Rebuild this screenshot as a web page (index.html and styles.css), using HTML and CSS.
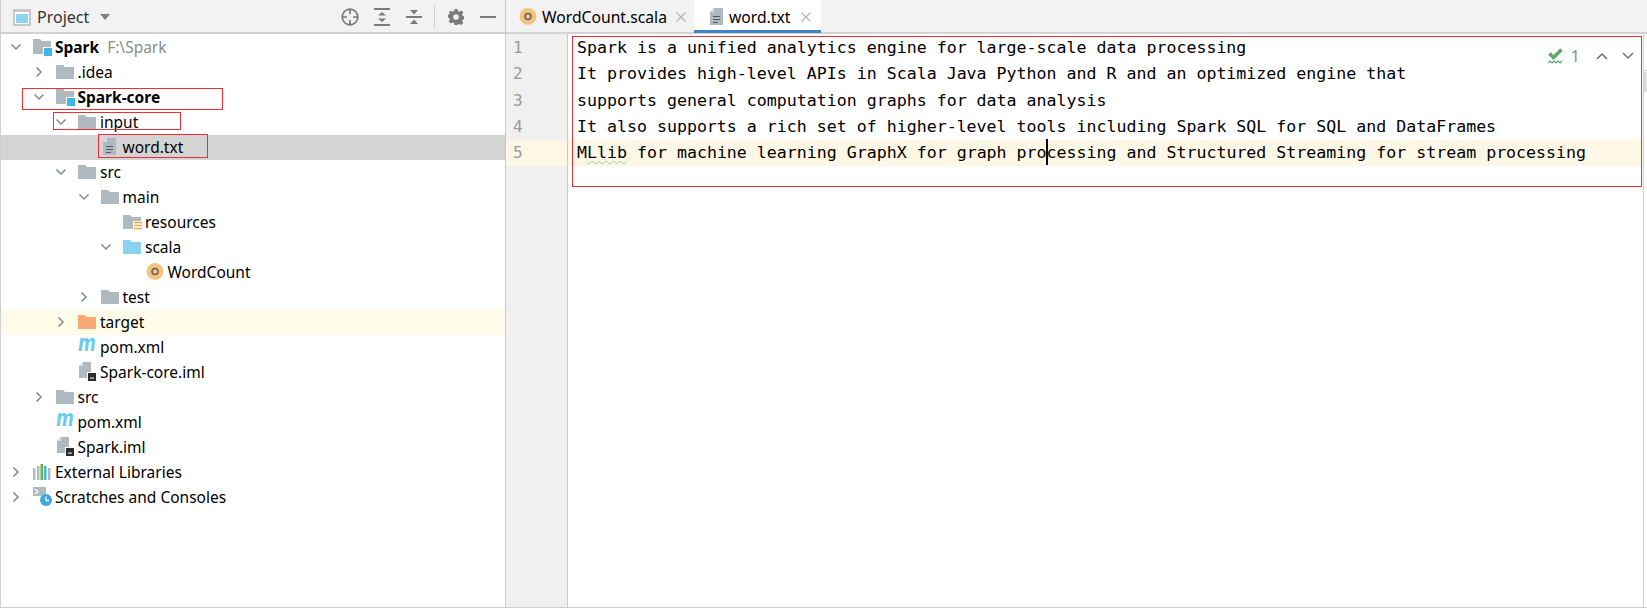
FILE: index.html
```html
<!DOCTYPE html>
<html lang="en">
<head>
<meta charset="utf-8">
<title>Spark - word.txt</title>
<link rel="stylesheet" href="styles.css">
</head>
<body>
<svg class="defs" width="0" height="0" aria-hidden="true">
  <symbol id="open" viewBox="0 0 12 12"><path d="M1.500 3.500 6 8l4.500-4.500" fill="none" stroke="#7f8b91" stroke-width="1.500"/></symbol>
  <symbol id="closed" viewBox="0 0 12 12"><path d="M3.500 1.500 8 6l-4.500 4.500" fill="none" stroke="#7f8b91" stroke-width="1.500"/></symbol>
  <symbol id="folder" viewBox="0 0 20 19"><path d="M1 3h7l2 2h9v12H1z" fill="#afb9c0"/></symbol>
  <symbol id="module" viewBox="0 0 20 19"><path d="M1 2h7l2 2h9v13H1z" fill="#afb9c0"/><rect x="11" y="10" width="9" height="9" fill="#fff"/><rect x="12" y="11" width="8" height="8" fill="#40b6e0"/></symbol>
  <symbol id="res" viewBox="0 0 20 19"><path d="M1 3h7l2 2h9v12H1z" fill="#afb9c0"/><rect x="11" y="9" width="9" height="10" fill="#fff"/><path d="M12 10.500h8M12 13.500h8M12 16.500h8" stroke="#e6a94f" stroke-width="1.500"/></symbol>
  <symbol id="source" viewBox="0 0 20 19"><path d="M1 3h7l2 2h9v12H1z" fill="#8ad3ee"/></symbol>
  <symbol id="target" viewBox="0 0 20 19"><path d="M1 3h7l2 2h9v12H1z" fill="#f9a875"/></symbol>
  <symbol id="txt" viewBox="0 0 20 19"><path d="M7 1h9v17H3V5z" fill="#afb9c0"/><path d="M7 1v4H3z" fill="#d9dee1"/><path d="M6 9.500h7M6 12.500h7M6 15.500h5" stroke="#555" stroke-width="1"/></symbol>
  <symbol id="scala" viewBox="0 0 20 19"><circle cx="10" cy="9.500" r="8.500" fill="#f4c582"/><circle cx="10" cy="9.500" r="3" fill="none" stroke="#6b6257" stroke-width="1.600"/></symbol>
  <symbol id="iml" viewBox="0 0 20 19"><path d="M6 0h8v16H2V4z" fill="#afb9c0"/><path d="M6 0v4H2z" fill="#dde1e4"/><rect x="10" y="10" width="9" height="9" fill="#fff"/><rect x="11" y="11" width="8" height="8" fill="#2b2b2b"/><rect x="13" y="15.500" width="4" height="1.200" fill="#ddd"/></symbol>
  <symbol id="libs" viewBox="0 0 20 19"><rect x="1" y="6" width="2.500" height="12" fill="#afb9c0"/><rect x="5" y="4" width="2.500" height="14" fill="#afb9c0"/><rect x="8.500" y="2" width="2.500" height="16" fill="#62b543"/><rect x="12" y="4" width="2.500" height="14" fill="#40b6e0"/><rect x="16" y="6" width="2.500" height="12" fill="#afb9c0"/></symbol>
  <symbol id="scratch" viewBox="0 0 20 19"><path d="M1 0h13v9H1z" fill="#afb9c0"/><path d="M3 2l3 2.500L3 7" fill="none" stroke="#fff" stroke-width="1.200"/><circle cx="14" cy="13" r="6" fill="#40a5e0"/><path d="M14 9.500V13.500h3" fill="none" stroke="#fff" stroke-width="1.300"/></symbol>
</svg>

<div class="app">
  <aside class="project">
    <header class="tool-header">
      <div class="title">
        <svg class="project-icon" width="18" height="17" viewBox="0 0 18 17"><rect width="18" height="17" fill="#c3c9cd"/><rect x="2" y="3" width="14" height="12" fill="#fff"/><rect x="3" y="5" width="12" height="9" fill="#8fd2ee"/></svg>
        <span>Project</span>
        <svg class="drop" width="10" height="6" viewBox="0 0 10 6"><path d="M0 0h10L5 6z" fill="#7f7f7f"/></svg>
      </div>
      <div class="tools">
        <span class="tool"><svg width="18" height="18" viewBox="0 0 18 18" fill="none" stroke="#7a7a7a" stroke-width="1.700"><circle cx="9" cy="9" r="7.800"/><path d="M9 1v5M9 12v5M1 9h5M12 9h5"/></svg></span>
        <span class="tool"><svg width="16" height="18" viewBox="0 0 16 18"><path d="M0 1h16M0 17h16" stroke="#7a7a7a" stroke-width="2"/><path d="M8 4l4 3.500H4zM8 14l-4-3.500h8z" fill="#7a7a7a"/></svg></span>
        <span class="tool"><svg width="16" height="18" viewBox="0 0 16 18"><path d="M0 9h16" stroke="#7a7a7a" stroke-width="2"/><path d="M8 6.500L4 2h8zM8 11.500l4 4.500H4z" fill="#7a7a7a"/></svg></span>
        <span class="sep"></span>
        <span class="tool"><svg width="16" height="16" viewBox="0 0 16 16"><path fill="#7a7a7a" fill-rule="evenodd" d="M6.500 0h3l.4 2.100 1.500.6L13.200 1.500l2.100 2.100-1.200 1.800.6 1.500 1.300.4v3l-1.300.4-.6 1.500 1.200 1.800-2.100 2.100-1.800-1.200-1.500.6L9.500 16h-3l-.4-2.100-1.500-.6-1.800 1.200L.7 12.400l1.200-1.800-.6-1.500L0 8.700V5.700l1.300-.4.6-1.500L.7 3.600 2.800 1.500l1.800 1.200 1.500-.6zM8 5.200a2.800 2.800 0 1 0 0 5.600 2.800 2.800 0 0 0 0-5.600z"/></svg></span>
        <span class="tool"><svg width="16" height="4" viewBox="0 0 16 4"><rect y="1" width="16" height="2" fill="#7a7a7a"/></svg></span>
      </div>
    </header>
    <ul class="tree">
      <li class="row l0"><svg class="arrow"><use href="#open"/></svg><svg class="ico"><use href="#module"/></svg><b>Spark</b><span class="path">F:\Spark</span></li>
      <li class="row l1"><svg class="arrow"><use href="#closed"/></svg><svg class="ico"><use href="#folder"/></svg><span>.idea</span></li>
      <li class="row l1"><svg class="arrow"><use href="#open"/></svg><svg class="ico"><use href="#module"/></svg><b>Spark-core</b></li>
      <li class="row l2"><svg class="arrow"><use href="#open"/></svg><svg class="ico"><use href="#folder"/></svg><span>input</span></li>
      <li class="row l3 selected"><span class="arrow"></span><svg class="ico"><use href="#txt"/></svg><span>word.txt</span></li>
      <li class="row l2"><svg class="arrow"><use href="#open"/></svg><svg class="ico"><use href="#folder"/></svg><span>src</span></li>
      <li class="row l3"><svg class="arrow"><use href="#open"/></svg><svg class="ico"><use href="#folder"/></svg><span>main</span></li>
      <li class="row l4"><span class="arrow"></span><svg class="ico"><use href="#res"/></svg><span>resources</span></li>
      <li class="row l4"><svg class="arrow"><use href="#open"/></svg><svg class="ico"><use href="#source"/></svg><span>scala</span></li>
      <li class="row l5"><span class="arrow"></span><svg class="ico"><use href="#scala"/></svg><span>WordCount</span></li>
      <li class="row l3"><svg class="arrow"><use href="#closed"/></svg><svg class="ico"><use href="#folder"/></svg><span>test</span></li>
      <li class="row l2 excluded"><svg class="arrow"><use href="#closed"/></svg><svg class="ico"><use href="#target"/></svg><span>target</span></li>
      <li class="row l2"><span class="arrow"></span><span class="ico maven">m</span><span>pom.xml</span></li>
      <li class="row l2"><span class="arrow"></span><svg class="ico"><use href="#iml"/></svg><span>Spark-core.iml</span></li>
      <li class="row l1"><svg class="arrow"><use href="#closed"/></svg><svg class="ico"><use href="#folder"/></svg><span>src</span></li>
      <li class="row l1"><span class="arrow"></span><span class="ico maven">m</span><span>pom.xml</span></li>
      <li class="row l1"><span class="arrow"></span><svg class="ico"><use href="#iml"/></svg><span>Spark.iml</span></li>
      <li class="row l0"><svg class="arrow"><use href="#closed"/></svg><svg class="ico"><use href="#libs"/></svg><span>External Libraries</span></li>
      <li class="row l0"><svg class="arrow"><use href="#closed"/></svg><svg class="ico"><use href="#scratch"/></svg><span>Scratches and Consoles</span></li>
    </ul>
  </aside>

  <main class="editor-pane">
    <nav class="tabs">
      <div class="tab"><svg class="tab-ico"><use href="#scala"/></svg><span>WordCount.scala</span><svg class="close" width="10" height="10" viewBox="0 0 10 10"><path d="M.5.500l9 9M9.500.500l-9 9" stroke="#b4b4b4" stroke-width="1.200"/></svg></div>
      <div class="tab active"><svg class="tab-ico"><use href="#txt"/></svg><span>word.txt</span><svg class="close" width="10" height="10" viewBox="0 0 10 10"><path d="M.5.500l9 9M9.500.500l-9 9" stroke="#b4b4b4" stroke-width="1.200"/></svg></div>
    </nav>
    <div class="editor">
      <ol class="gutter">
        <li>1</li><li>2</li><li>3</li><li>4</li><li class="current">5</li>
      </ol>
      <div class="code">
        <div class="line">Spark is a unified analytics engine for large-scale data processing</div>
        <div class="line">It provides high-level APIs in Scala Java Python and R and an optimized engine that</div>
        <div class="line">supports general computation graphs for data analysis</div>
        <div class="line">It also supports a rich set of higher-level tools including Spark SQL for SQL and DataFrames</div>
        <div class="line current">M<span class="typo">Llib</span> for machine learning GraphX for graph pro<span class="caret"></span>cessing and Structured Streaming for stream processing</div>
      </div>
      <div class="scrollbar"><div class="marks"></div><div class="thumb"></div></div>
      <div class="inspect">
        <svg width="15" height="16" viewBox="0 0 15 16"><path d="M1.500 5.500l4 4L13.500 1.500" fill="none" stroke="#59a869" stroke-width="3.600"/><path d="M0 15l2-2 2 2 2-2 2 2 2-2 2 2 2-2" fill="none" stroke="#59a869" stroke-width="1.200"/></svg>
        <span class="count">1</span>
        <svg class="nav-up" width="12" height="8" viewBox="0 0 12 8"><path d="M1 7l5-5 5 5" fill="none" stroke="#6e6e6e" stroke-width="1.500"/></svg>
        <svg class="nav-down" width="12" height="8" viewBox="0 0 12 8"><path d="M1 1l5 5 5-5" fill="none" stroke="#6e6e6e" stroke-width="1.500"/></svg>
      </div>
    </div>
  </main>
</div>

<div class="mark m1"></div>
<div class="mark m2"></div>
<div class="mark m3"></div>
<div class="mark m4"></div>
</body>
</html>
```

FILE: styles.css
```css
* { box-sizing: border-box; }
html, body { margin: 0; height: 100%; background: #fff; overflow: hidden; }
body { font-family: "Noto Sans", "Open Sans", sans-serif; font-size: 15.5px; color: #000; }
.defs { position: absolute; }

.app { display: flex; height: 608px; border-left: 1px solid #cfcfcf; border-bottom: 1px solid #cfcfcf; }

.project { width: 505px; flex: none; border-right: 1px solid #c9c9c9; }
.tool-header { height: 34px; display: flex; align-items: center; justify-content: space-between; background: #f2f2f2; border-bottom: 2px solid #d3d3d3; padding: 2px 1px 0 0; }
.title { display: flex; align-items: center; padding-left: 12px; color: #333; font-size: 16px; }
.project-icon { margin-right: 6px; }
.drop { margin-left: 11px; }
.tools { display: flex; align-items: center; }
.tool { width: 32px; height: 30px; display: flex; align-items: center; justify-content: center; }
.sep { width: 1px; height: 24px; background: #d0d0d0; margin: 0 5px 0 4px; }

.tree { list-style: none; margin: 1px 0 0; padding: 0; }
.row { height: 25px; padding-bottom: 2px; display: flex; align-items: center; white-space: nowrap; }
.l0 { padding-left: 9px; }
.l1 { padding-left: 31.5px; }
.l2 { padding-left: 54px; }
.l3 { padding-left: 76.5px; }
.l4 { padding-left: 99px; }
.l5 { padding-left: 121.5px; }
.arrow { width: 12px; height: 12px; flex: none; margin-right: 10px; }
.ico { width: 20px; height: 19px; flex: none; margin-right: 3px; }
.maven { font: italic 700 18px/17px "DejaVu Sans", sans-serif; color: #6ecbea; text-align: center; transform: scale(.95, 1.3); transform-origin: center bottom; }
.row b { font-weight: 700; }
.path { color: #8c8c8c; margin-left: 8px; }
.selected { background: #d4d4d4; }
.excluded { background: #fefce8; }

.editor-pane { flex: 1; min-width: 0; display: flex; flex-direction: column; }
.tabs { height: 34px; flex: none; display: flex; background: #f2f2f2; border-bottom: 2px solid #d3d3d3; padding-left: 11px; }
.tab { height: 33px; display: flex; align-items: center; padding: 0 4px 0 1px; font-size: 15.7px; }
.tab.active { background: #fff; border-bottom: 3px solid #4083c9; margin-left: 4px; padding: 3px 10px 0 13px; width: 127px; }
.tab-ico { width: 20px; height: 19px; margin-right: 4px; flex: none; }
.tab.active .tab-ico { margin-right: 2px; }
.close { margin-left: 9px; flex: none; }
.active .close { margin-left: 11px; }

.editor { flex: 1; display: flex; position: relative; min-height: 0; }
.gutter { width: 62px; flex: none; list-style: none; margin: 0; padding: 1px 0 0; background: #f0f0f0; border-right: 1px solid #c9c9c9; color: #999; font: 16px/26.25px "DejaVu Sans Mono", monospace; }
.gutter li { padding-left: 7px; height: 26.25px; }
.gutter .current { background: #fdf8e6; }
.code { flex: 1; min-width: 0; padding-top: 1px; font: 16.6px/26.25px "DejaVu Sans Mono", monospace; color: #000; }
.line { padding-left: 9px; height: 26.25px; white-space: pre; }
.line.current { background: #fdf8e6; }
.typo { text-decoration: underline wavy #9ccc9c 1px; text-underline-offset: 2px; }
.caret { position: relative; }
.caret::after { content: ""; position: absolute; left: -1px; top: -4px; width: 2px; height: 26px; background: #000; }

.scrollbar { width: 4px; flex: none; border-left: 1px solid #d0d0d0; }
.marks { height: 37px; border-bottom: 1px solid #d0d0d0; }
.thumb { height: 20px; margin-top: 1px; background: #dcdcdc; }

.inspect { position: absolute; top: 11px; right: 13px; display: flex; align-items: center; color: #8b8b8b; font-size: 16px; }
.count { margin-left: 8px; }
.nav-up { margin-left: 16px; }
.nav-down { margin-left: 14px; }

.mark { position: absolute; border: 1px solid #ee2d34; }
.m1 { left: 22px; top: 88px; width: 201px; height: 22px; }
.m2 { left: 53px; top: 112px; width: 128px; height: 18px; }
.m3 { left: 98px; top: 134px; width: 110px; height: 24px; }
.m4 { left: 572px; top: 36px; width: 1070px; height: 151px; }
```
